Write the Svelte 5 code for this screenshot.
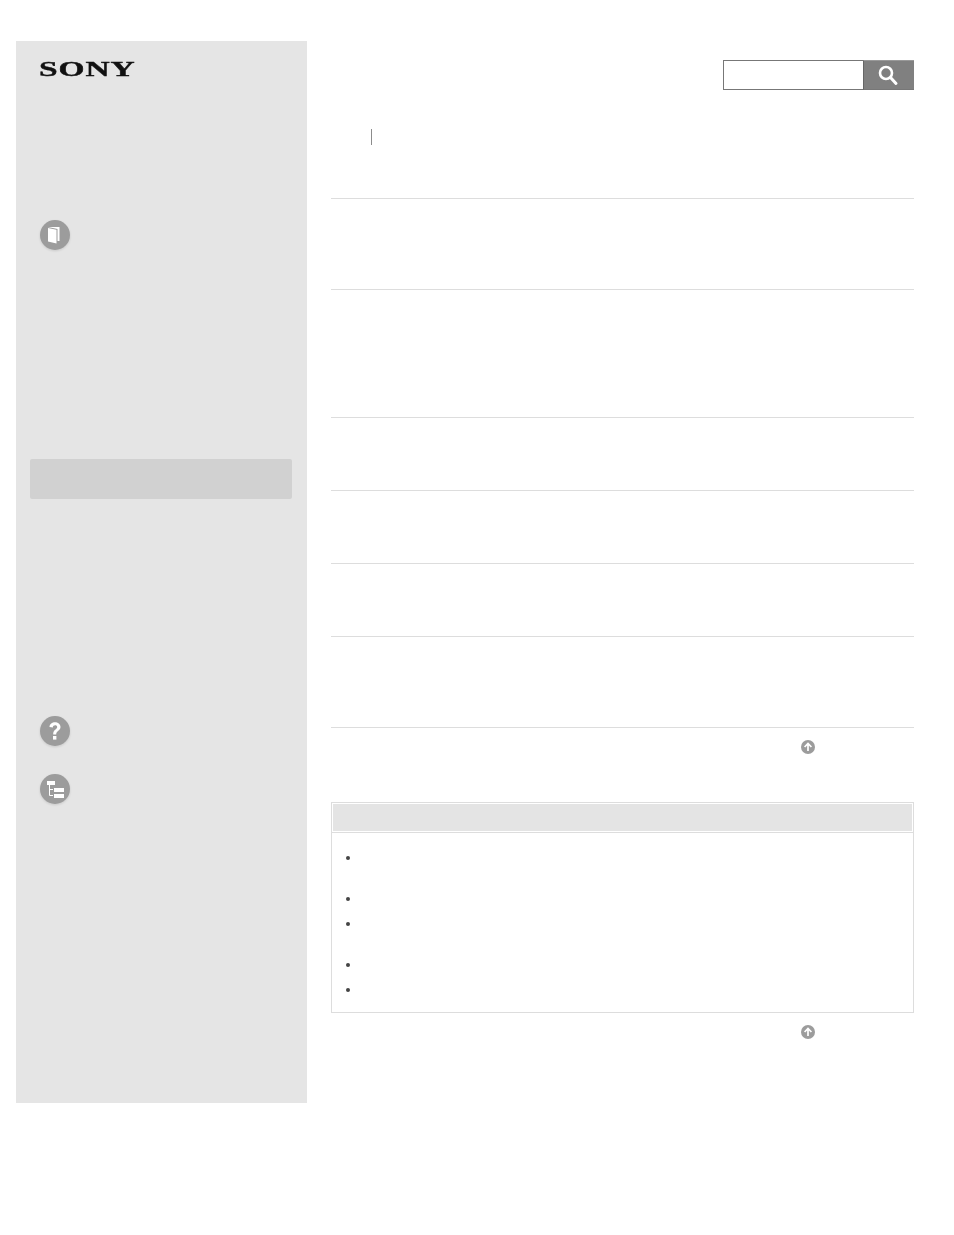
<script>
  const rows = [91, 128, 73, 73, 73, 91];
  const notes = [41, 25, 41, 25, 25];
</script>

<div class="page">
  <aside class="sidebar">
    <div class="logo">SONY</div>

    <div class="nav-icon nav-manual">
      <svg width="32" height="32" viewBox="0 0 32 32">
        <circle cx="16" cy="16" r="15" fill="#9c9c9c" />
        <path d="M9 8 L20.5 8 L20.5 22 L18.5 22 L18.5 10 L9 8Z" fill="#fff" />
        <path d="M9 9 L17.5 10.8 L17.5 24.5 L9 22.5Z" fill="#fff" />
      </svg>
    </div>

    <div class="nav-active"></div>

    <div class="nav-icon nav-help">
      <svg width="32" height="32" viewBox="0 0 32 32">
        <circle cx="16" cy="16" r="15" fill="#9c9c9c" />
        <path d="M10.5 12 C10.5 5.5 21.5 5.5 21.5 12 C21.5 16 17.2 15.5 17.2 19.5 L14.2 19.5 C14 14.5 18.2 14.5 18.2 12 C18.2 9.6 13.8 9.6 13.8 12.6Z" fill="#fff" />
        <rect x="14" y="21" width="3.4" height="3.6" fill="#fff" />
      </svg>
    </div>

    <div class="nav-icon nav-tree">
      <svg width="32" height="32" viewBox="0 0 32 32">
        <circle cx="16" cy="16" r="15" fill="#9c9c9c" />
        <rect x="8" y="8" width="8" height="4" fill="#fff" />
        <path d="M10.5 12 V22.5 H14 M10.5 16.5 H14" stroke="#fff" stroke-width="1" fill="none" />
        <rect x="15" y="15" width="10" height="4" fill="#fff" />
        <rect x="15" y="21" width="10" height="4" fill="#fff" />
      </svg>
    </div>
  </aside>

  <main class="content">
    <div class="search">
      <div class="search-input"></div>
      <div class="search-btn">
        <svg width="22" height="22" viewBox="0 0 22 22">
          <circle cx="8" cy="9" r="6" stroke="#fff" stroke-width="2.6" fill="none" />
          <path d="M12.5 13.5 L18 19.5" stroke="#fff" stroke-width="3" stroke-linecap="round" />
        </svg>
      </div>
    </div>

    <div class="crumbs"><span class="crumb-sep"></span></div>

    <div class="rows">
      {#each rows as h}
        <div class="row" style="height: {h}px"></div>
      {/each}
    </div>

    <div class="to-top">
      <svg width="16" height="16" viewBox="0 0 16 16">
        <circle cx="8" cy="8" r="7" fill="#9c9c9c" />
        <path d="M8 12 V5 M4.6 8 L8 4.4 L11.4 8" stroke="#fff" stroke-width="1.7" fill="none" />
      </svg>
    </div>

    <section class="notes">
      <div class="notes-wrap">
        <div class="notes-head"></div>
      </div>
      <ul>
        {#each notes as h}
          <li style="height: {h}px"></li>
        {/each}
      </ul>
    </section>

    <div class="to-top">
      <svg width="16" height="16" viewBox="0 0 16 16">
        <circle cx="8" cy="8" r="7" fill="#9c9c9c" />
        <path d="M8 12 V5 M4.6 8 L8 4.4 L11.4 8" stroke="#fff" stroke-width="1.7" fill="none" />
      </svg>
    </div>
  </main>
</div>

<style>
  :global(body) {
    background: #fff;
    font-family: "Liberation Sans", Arial, sans-serif;
  }
  .page {
    display: flex;
    align-items: flex-start;
    height: 1235px;
    padding: 41px 40px 0 16px;
    box-sizing: border-box;
  }
  .sidebar {
    width: 291px;
    height: 1062px;
    flex-shrink: 0;
    background: #e5e5e5;
    padding-top: 16px;
    box-sizing: border-box;
  }
  .logo {
    width: 60px;
    height: 23px;
    margin-left: 23px;
    font-family: "Liberation Serif", serif;
    font-weight: 700;
    font-size: 22px;
    line-height: 23px;
    letter-spacing: 0.6px;
    color: #111;
    -webkit-text-stroke: 0.4px #111;
    transform: scaleX(1.52);
    transform-origin: left center;
  }
  .nav-icon {
    width: 32px;
    height: 32px;
    margin-left: 23px;
    filter: drop-shadow(0 1px 1px rgba(0, 0, 0, 0.12));
  }
  .nav-icon svg {
    display: block;
  }
  .nav-manual {
    margin-top: 139px;
  }
  .nav-active {
    width: 262px;
    height: 40px;
    margin: 208px 0 0 14px;
    background: #d1d1d1;
    border-radius: 2px;
  }
  .nav-help {
    margin-top: 216px;
  }
  .nav-tree {
    margin-top: 26px;
  }
  .content {
    width: 583px;
    margin-left: 24px;
    flex-shrink: 0;
  }
  .search {
    display: flex;
    justify-content: flex-end;
    margin-top: 19px;
    height: 30px;
  }
  .search-input {
    width: 140px;
    height: 30px;
    box-sizing: border-box;
    border: 1px solid #777;
    border-right: 0;
    background: #fff;
  }
  .search-btn {
    width: 51px;
    height: 30px;
    box-sizing: border-box;
    border-top: 1px solid #999;
    border-bottom: 1px solid #777;
    border-left: 1px solid #666;
    background: #808080;
    display: flex;
    align-items: center;
    justify-content: center;
  }
  .crumbs {
    height: 16px;
    margin-top: 39px;
    padding-left: 40px;
  }
  .crumb-sep {
    display: block;
    width: 1px;
    height: 16px;
    background: #8c8c8c;
  }
  .rows {
    margin-top: 53px;
    border-top: 1px solid #ddd;
  }
  .row {
    box-sizing: border-box;
    border-bottom: 1px solid #ddd;
  }
  .to-top {
    height: 16px;
    margin-top: 11px;
    padding-left: 469px;
  }
  .to-top svg {
    display: block;
  }
  .notes {
    margin-top: 47px;
    border: 1px solid #ddd;
    height: 211px;
    box-sizing: border-box;
  }
  .notes-wrap {
    padding: 1px;
    border-bottom: 1px solid #ddd;
  }
  .notes-head {
    height: 27px;
    background: #e4e4e4;
  }
  ul {
    list-style: none;
    margin: 0;
    padding: 13px 0 0;
  }
  li {
    position: relative;
  }
  li::before {
    content: "";
    position: absolute;
    left: 14px;
    top: 10px;
    width: 4px;
    height: 4px;
    border-radius: 50%;
    background: #444;
  }
</style>
